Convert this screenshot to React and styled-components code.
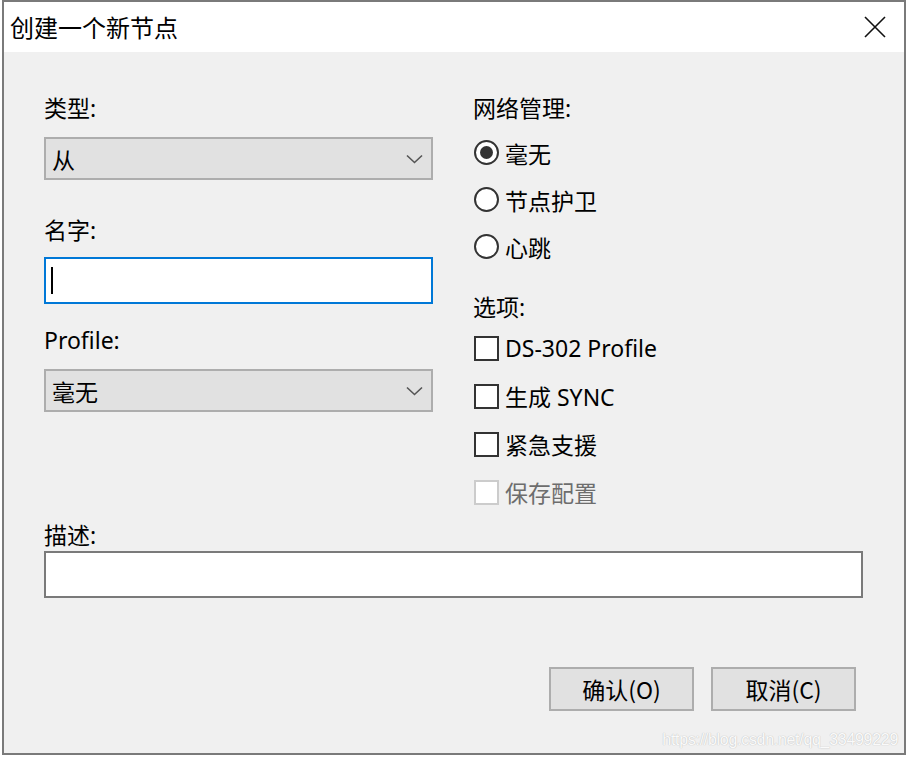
import React from 'react';
import styled, { createGlobalStyle } from 'styled-components';

const GlobalStyle = createGlobalStyle`
  html, body {
    margin: 0;
    padding: 0;
    background: #ffffff;
  }
  body {
    font-family: "Noto Sans", "Noto Sans CJK SC", sans-serif;
    color: #000;
  }
`;

const Window = styled.div`
  position: relative;
  box-sizing: border-box;
  width: 904px;
  height: 755px;
  margin-left: 2px;
  border: 2px solid #7a7a7a;
  background: #f0f0f0;
  display: flex;
  flex-direction: column;
`;

const TitleBar = styled.div`
  height: 50px;
  background: #ffffff;
  display: flex;
  align-items: center;
  justify-content: space-between;
  padding-left: 6px;
  padding-right: 14px;
`;

const Title = styled.span`
  font-size: 24px;
  font-family: "Noto Sans CJK SC", sans-serif;
  line-height: 1;
`;

const CloseButton = styled.button`
  width: 30px;
  height: 30px;
  border: none;
  background: transparent;
  padding: 0;
  display: flex;
  align-items: center;
  justify-content: center;
  cursor: pointer;
`;

const Body = styled.div`
  flex: 1;
  padding: 41px 41px 0 40px;
  display: flex;
  flex-direction: column;
`;

const Columns = styled.div`
  display: grid;
  grid-template-columns: 389px 1fr;
  column-gap: 40px;
`;

const Column = styled.div`
  display: flex;
  flex-direction: column;
`;

const Label = styled.div`
  font-size: 23px;
  line-height: 30px;
  height: 30px;
  margin-top: ${p => p.$top || 0}px;
  font-family: "Noto Sans", "Noto Sans CJK SC", sans-serif;
`;

const Combo = styled.div`
  box-sizing: border-box;
  height: 43px;
  margin-top: 14px;
  border: 2px solid #adadad;
  background: #e1e1e1;
  display: flex;
  align-items: center;
  justify-content: space-between;
  padding: 0 8px 0 6px;
  font-size: 23px;
  font-family: "Noto Sans CJK SC", sans-serif;
`;

const TextInput = styled.div`
  box-sizing: border-box;
  height: 47px;
  margin-top: ${p => p.$top || 0}px;
  background: #ffffff;
  border: ${p => (p.$focused ? '2px solid #0078d7' : '2px solid #7a7a7a')};
  display: flex;
  align-items: center;
  padding-left: 5px;
`;

const Caret = styled.div`
  width: 2px;
  height: 27px;
  background: #000;
`;

const OptionList = styled.div`
  margin-top: ${p => p.$top || 0}px;
`;

const OptionRow = styled.label`
  height: ${p => p.$h}px;
  display: flex;
  align-items: center;
  gap: 6px;
  padding-left: 1px;
  font-size: 23px;
  color: ${p => (p.$disabled ? '#6d6d6d' : '#000')};
  font-family: "Noto Sans", "Noto Sans CJK SC", sans-serif;
`;

const Radio = styled.span`
  box-sizing: border-box;
  width: 25px;
  height: 25px;
  border-radius: 50%;
  border: 2px solid #333;
  background: #fff;
  display: flex;
  align-items: center;
  justify-content: center;
  &::after {
    content: '';
    width: 13px;
    height: 13px;
    border-radius: 50%;
    background: #333;
    display: ${p => (p.$checked ? 'block' : 'none')};
  }
`;

const Checkbox = styled.span`
  box-sizing: border-box;
  width: 25px;
  height: 25px;
  border: 2px solid ${p => (p.$disabled ? '#cccccc' : '#333333')};
  background: #fff;
`;

const ButtonRow = styled.div`
  margin-top: 69px;
  padding-right: 7px;
  display: flex;
  justify-content: flex-end;
  gap: 17px;
`;

const Button = styled.button`
  box-sizing: border-box;
  width: 145px;
  height: 44px;
  border: 2px solid #adadad;
  background: #e1e1e1;
  font-size: 23px;
  font-family: "Noto Sans CJK SC", sans-serif;
  color: #000;
  padding: 0;
  cursor: pointer;
`;

const Watermark = styled.div`
  position: absolute;
  right: 6px;
  bottom: 4px;
  font-size: 16px;
  letter-spacing: -0.3px;
  font-family: "Liberation Sans", Arial, sans-serif;
  color: #fafafa;
  text-shadow: 0 0 1px #bdbdbd, 0 0 1px #cfcfcf;
`;

const Chevron = () => (
  <svg width="17" height="10" viewBox="0 0 17 10">
    <path d="M1 1.5 L8.5 8.5 L16 1.5" fill="none" stroke="#555" strokeWidth="1.6" />
  </svg>
);

const CloseIcon = () => (
  <svg width="22" height="22" viewBox="0 0 22 22">
    <path d="M1 1 L21 21 M21 1 L1 21" stroke="#111" strokeWidth="1.6" />
  </svg>
);

export default function App() {
  return (
    <>
      <GlobalStyle />
      <Window>
        <TitleBar>
          <Title>创建一个新节点</Title>
          <CloseButton><CloseIcon /></CloseButton>
        </TitleBar>
        <Body>
          <Columns>
            <Column>
              <Label>类型:</Label>
              <Combo>
                <span>从</span>
                <Chevron />
              </Combo>
              <Label $top={35}>名字:</Label>
              <TextInput $top={12} $focused>
                <Caret />
              </TextInput>
              <Label $top={21}>Profile:</Label>
              <Combo>
                <span>毫无</span>
                <Chevron />
              </Combo>
            </Column>
            <Column>
              <Label>网络管理:</Label>
              <OptionList $top={6}>
                <OptionRow $h={47}><Radio $checked />毫无</OptionRow>
                <OptionRow $h={47}><Radio />节点护卫</OptionRow>
                <OptionRow $h={47}><Radio />心跳</OptionRow>
              </OptionList>
              <Label $top={22}>选项:</Label>
              <OptionList $top={2}>
                <OptionRow $h={48}><Checkbox />DS-302 Profile</OptionRow>
                <OptionRow $h={48}><Checkbox />生成 SYNC</OptionRow>
                <OptionRow $h={48}><Checkbox />紧急支援</OptionRow>
                <OptionRow $h={48} $disabled><Checkbox $disabled />保存配置</OptionRow>
              </OptionList>
            </Column>
          </Columns>
          <Label $top={4}>描述:</Label>
          <TextInput $top={1} />
          <ButtonRow>
            <Button>确认(O)</Button>
            <Button>取消(C)</Button>
          </ButtonRow>
        </Body>
        <Watermark>https://blog.csdn.net/qq_33499229</Watermark>
      </Window>
    </>
  );
}
